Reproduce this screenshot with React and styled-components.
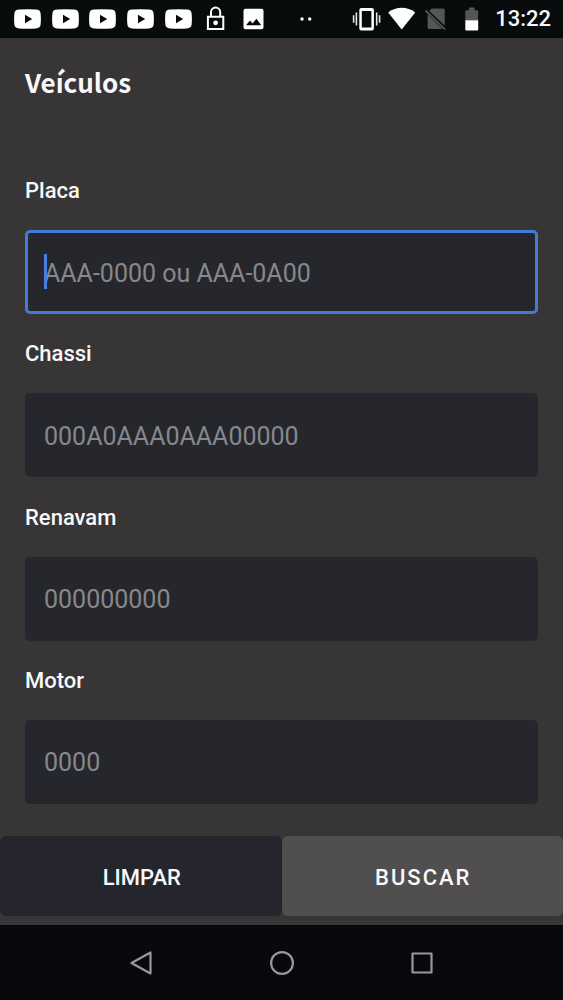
import React, { useState } from 'react'

import styled, { createGlobalStyle, css } from 'styled-components'

const GlobalStyle = createGlobalStyle`
  * {
    box-sizing: border-box;
  }

  body {
    margin: 0;
    background: #373536;
    font-family: Roboto, sans-serif;
  }
`

const Page = styled.div`
  display: flex;
  flex-direction: column;
  min-height: 100vh;
  color: #f8f8fa;
`

const StatusBar = styled.header`
  display: flex;
  align-items: center;
  height: 38px;
  padding: 0 12px 0 14px;
  background: #070b0c;
`

const Notifications = styled.div`
  display: flex;
  justify-content: space-between;
  width: 253px;
`

const System = styled.div`
  display: flex;
  align-items: center;
  margin-left: auto;
`

const StatusIcon = styled.svg`
  display: block;
  width: ${({ $width }) => $width}px;
  height: 28px;
  fill: #ffffff;
`

const Clock = styled.time`
  padding-left: 6px;
  font-size: 22px;
  font-weight: 500;
  line-height: 30px;
`

const Main = styled.main`
  display: flex;
  flex: 1;
  flex-direction: column;
`

const Title = styled.h1`
  margin: 24px 25px 75px;
  font-family: 'Noto Sans CJK JP', sans-serif;
  font-size: 26px;
  font-weight: 700;
  line-height: 40px;
`

const Form = styled.form`
  display: flex;
  flex: 1;
  flex-direction: column;
`

const Fields = styled.div`
  display: flex;
  flex: 1;
  flex-direction: column;
  justify-content: space-between;
  padding: 0 25px 32px;
`

const Field = styled.div`
  display: flex;
  flex-direction: column;
  gap: 25px;
`

const Label = styled.label`
  font-size: 22px;
  font-weight: 500;
  line-height: 28px;
`

const InputBox = styled.div`
  position: relative;
  display: flex;
  height: 84px;
`

const Caret = styled.span`
  position: absolute;
  top: 24px;
  left: 19px;
  width: 3px;
  height: 35px;
  background: #477ee0;
`

const Input = styled.input`
  width: 100%;
  padding: 2px 16px 0;
  border: 3px solid transparent;
  border-radius: 5px;
  outline: none;
  background: #25272d;
  background-clip: border-box;
  color: #f8f8fa;
  font-family: inherit;
  font-size: 25px;

  ${({ $active }) =>
    $active &&
    css`
      border-color: #477ad6;
    `}

  &::placeholder {
    color: #87878c;
    opacity: 1;
  }
`

const Actions = styled.div`
  display: grid;
  grid-template-columns: 1fr 1fr;
  margin-bottom: 9px;
`

const Button = styled.button`
  height: 80px;
  padding: 2px 0 0 2px;
  border: none;
  border-radius: 6px;
  background: ${({ $primary }) => ($primary ? '#504e4f' : '#25262d')};
  color: #f8f8fa;
  font-family: inherit;
  font-size: 22px;
  font-weight: 500;
  letter-spacing: ${({ $primary }) => ($primary ? '2px' : 'normal')};
`

const NavBar = styled.nav`
  display: grid;
  grid-template-columns: repeat(3, 1fr);
  height: 75px;
  padding: 0 12.5%;
  background: #08090c;
`

const NavButton = styled.button`
  display: flex;
  align-items: center;
  justify-content: center;
  padding: 0;
  border: none;
  background: transparent;
`

const NavIcon = styled.svg`
  width: 28px;
  height: 28px;
  fill: none;
  stroke: #99999b;
  stroke-width: 2.2;
  stroke-linejoin: round;
`

const VideoIcon = () => (
  <StatusIcon $width={27} viewBox="0 0 27 28">
    <path
      fillRule="evenodd"
      d="M5 4.6Q13.5 4 22 4.6Q26.3 4.8 26.6 8.5Q27.2 14 26.6 19.5Q26.3 23.2 22 23.4Q13.5 24 5 23.4Q.7 23.2 .4 19.5Q-.2 14 .4 8.5Q.7 4.8 5 4.6ZM11 9.8V18.2L18.2 14Z"
    />
  </StatusIcon>
)

const LockIcon = () => (
  <StatusIcon $width={27} viewBox="0 0 27 28">
    <path
      d="M9 11.5V7.2a4.6 4.6 0 0 1 9.2 0v4.3M5.9 11.8h15.4v12.3H5.9z"
      fill="none"
      stroke="#fff"
      strokeWidth="2"
    />
    <circle cx="13.6" cy="17.8" r="2.4" />
  </StatusIcon>
)

const PictureIcon = () => (
  <StatusIcon $width={27} viewBox="0 0 27 28">
    <path
      fillRule="evenodd"
      d="M5.5 3.8h16q2 0 2 2v16.4q0 2-2 2h-16q-2 0-2-2V5.8q0-2 2-2ZM6 20.3h15.2l-4.8-6.6-3.8 4.9-2.6-3.2Z"
    />
  </StatusIcon>
)

const VibrateIcon = () => (
  <StatusIcon $width={35} viewBox="0 0 35 28">
    <path
      fillRule="evenodd"
      d="M12.3 3h10.6q2 0 2 2v18.5q0 2-2 2H12.3q-2 0-2-2V5q0-2 2-2ZM12.8 6v16.5h9.6V6Z"
    />
    <path
      d="M7.4 7.5v13M4.6 10.3v7.4M27.7 7.5v13M30.6 10.3v7.4"
      stroke="#e4e4e4"
      strokeWidth="1.6"
    />
  </StatusIcon>
)

const WifiIcon = () => (
  <StatusIcon $width={35} viewBox="0 0 35 28">
    <path d="M4.2 7.4Q10.5 2.8 17.7 2.8Q25 2.8 31.2 7.4L17.7 24.4Z" />
  </StatusIcon>
)

const NoSimIcon = () => (
  <StatusIcon $width={35} viewBox="0 0 35 28">
    <path
      d="M12.5 3.5h11.7q1.5 0 1.5 1.500v15.6L10.2 6ZM8.6 9.2L23.5 24H10.1q-1.500 0-1.500-1.500Z"
      fill="#545657"
    />
    <path d="M6.500 5.500L26 24.3" stroke="#545657" strokeWidth="1.8" />
  </StatusIcon>
)

const BatteryIcon = () => (
  <StatusIcon $width={35} viewBox="0 0 35 28">
    <path d="M15 2.6h5.6v2.6h2.6q1 0 1 1v9H11.3v-9q0-1 1-1H15Z" fill="#545657" />
    <path d="M11.3 15.2h12.9v9.3q0 1-1 1H12.3q-1 0-1-1Z" />
  </StatusIcon>
)

const MoreIcon = () => (
  <StatusIcon $width={80} viewBox="0 0 80 28">
    <circle cx="35" cy="14" r="1.7" />
    <circle cx="42.7" cy="14" r="1.7" />
  </StatusIcon>
)

const fields = [
  { id: 'placa', label: 'Placa', placeholder: 'AAA-0000 ou AAA-0A00' },
  { id: 'chassi', label: 'Chassi', placeholder: '000A0AAA0AAA00000' },
  { id: 'renavam', label: 'Renavam', placeholder: '000000000' },
  { id: 'motor', label: 'Motor', placeholder: '0000' },
]

const empty = { placa: '', chassi: '', renavam: '', motor: '' }

const App = () => {
  const [values, setValues] = useState(empty)
  const [active, setActive] = useState('placa')

  return (
    <Page>
      <GlobalStyle />
      <StatusBar>
        <Notifications>
          <VideoIcon />
          <VideoIcon />
          <VideoIcon />
          <VideoIcon />
          <VideoIcon />
          <LockIcon />
          <PictureIcon />
        </Notifications>
        <MoreIcon />
        <System>
          <VibrateIcon />
          <WifiIcon />
          <NoSimIcon />
          <BatteryIcon />
          <Clock>13:22</Clock>
        </System>
      </StatusBar>
      <Main>
        <Title>Veículos</Title>
        <Form onSubmit={e => e.preventDefault()}>
          <Fields>
            {fields.map(({ id, label, placeholder }) => (
              <Field key={id}>
                <Label htmlFor={id}>{label}</Label>
                <InputBox>
                  <Input
                    id={id}
                    type="text"
                    placeholder={placeholder}
                    value={values[id]}
                    $active={active === id}
                    onFocus={() => setActive(id)}
                    onChange={e =>
                      setValues({ ...values, [id]: e.target.value })
                    }
                  />
                  {active === id && !values[id] && <Caret />}
                </InputBox>
              </Field>
            ))}
          </Fields>
          <Actions>
            <Button type="button" onClick={() => setValues(empty)}>
              LIMPAR
            </Button>
            <Button type="submit" $primary>
              BUSCAR
            </Button>
          </Actions>
        </Form>
      </Main>
      <NavBar>
        <NavButton type="button" aria-label="Voltar">
          <NavIcon viewBox="0 0 28 28">
            <path d="M23.5 3.5v21L4.5 14Z" />
          </NavIcon>
        </NavButton>
        <NavButton type="button" aria-label="Início">
          <NavIcon viewBox="0 0 28 28">
            <circle cx="14" cy="14" r="10.9" />
          </NavIcon>
        </NavButton>
        <NavButton type="button" aria-label="Recentes">
          <NavIcon viewBox="0 0 28 28">
            <path d="M4.5 4.5h19v19h-19Z" />
          </NavIcon>
        </NavButton>
      </NavBar>
    </Page>
  )
}

export default App
